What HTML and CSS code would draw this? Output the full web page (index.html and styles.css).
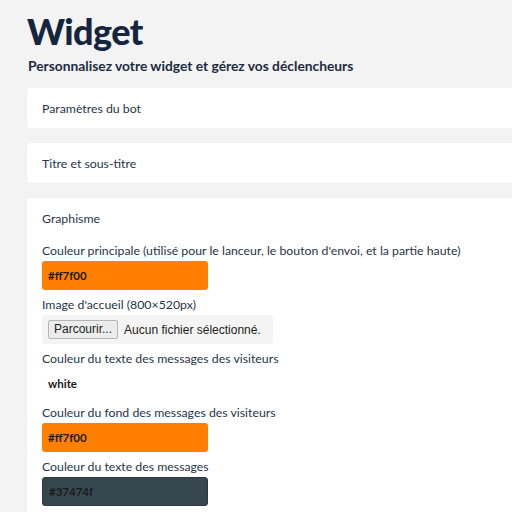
FILE: index.html
```html
<!DOCTYPE html>
<html lang="fr">
<head>
<meta charset="utf-8">
<link rel="stylesheet" href="styles.css">
</head>
<body>
<div class="page">
  <h1 class="title">Widget</h1>
  <p class="subtitle">Personnalisez votre widget et gérez vos déclencheurs</p>
  <div class="card collapsed">Paramètres du bot</div>
  <div class="card collapsed">Titre et sous-titre</div>
  <div class="card open">
    <div class="card-head">Graphisme</div>
    <div class="field">
      <label class="label">Couleur principale (utilisé pour le lanceur, le bouton d'envoi, et la partie haute)</label>
      <div class="color-input orange">#ff7f00</div>
    </div>
    <div class="field">
      <label class="label">Image d'accueil (800×520px)</label>
      <div class="file-input"><span class="file-btn">Parcourir...</span><span class="file-text">Aucun fichier sélectionné.</span></div>
    </div>
    <div class="field">
      <label class="label">Couleur du texte des messages des visiteurs</label>
      <div class="color-input white">white</div>
    </div>
    <div class="field">
      <label class="label">Couleur du fond des messages des visiteurs</label>
      <div class="color-input orange">#ff7f00</div>
    </div>
    <div class="field">
      <label class="label">Couleur du texte des messages</label>
      <div class="color-input dark">#37474f</div>
    </div>
  </div>
</div>
</body>
</html>
```
FILE: styles.css
```css
html, body {
  margin: 0;
  padding: 0;
  background: #f3f3f3;
  font-family: Lato, "Noto Sans", sans-serif;
  color: #26354a;
  overflow: hidden;
}
.page {
  padding: 9px 0 0 27px;
}
.title {
  margin: 0;
  font-size: 36px;
  font-weight: 900;
  color: #15253d;
  line-height: 44px;
  letter-spacing: -0.6px;
}
.subtitle {
  margin: 3px 0 0 1px;
  font-size: 13.8px;
  font-weight: 700;
  color: #1d2b3f;
  line-height: 20px;
}
.card {
  background: #fff;
  border-radius: 3px 0 0 3px;
  box-shadow: 0 0 2px rgba(0,0,0,0.04);
}
.collapsed {
  height: 40px;
  display: flex;
  align-items: center;
  padding-left: 15px;
  font-size: 12.3px;
  margin-top: 15px;
}
.subtitle + .card { margin-top: 12px; }
.open {
  margin-top: 15px;
  padding: 11px 15px 20px;
}
.card-head {
  font-size: 12.3px;
  line-height: 20px;
  margin-bottom: 14px;
}
.field { margin-bottom: 7px; }
.label {
  display: block;
  font-size: 12.3px;
  line-height: 16px;
  margin-bottom: 2px;
}
.color-input {
  width: 159px;
  height: 29px;
  box-sizing: border-box;
  border-radius: 3px;
  padding-left: 6px;
  display: flex;
  align-items: center;
  font-size: 11.5px;
  font-weight: 700;
  color: #1a1a1a;
}
.orange { background: #ff7f00; width: 166px; }
.dark { background: #37474f; width: 166px; border: 1px solid #2c3a40; }
.white { background: #fff; }
.file-input {
  width: 231px;
  height: 29px;
  box-sizing: border-box;
  background: #f4f4f4;
  border-radius: 3px;
  display: flex;
  align-items: center;
  padding-left: 6px;
  gap: 6px;
  font-family: "Liberation Sans", sans-serif;
  font-size: 12px;
  color: #222;
}
.file-btn {
  background: #ececec;
  border: 1px solid #b5b5b5;
  border-radius: 2px;
  padding: 1px 5px;
  line-height: 15px;
}
```
